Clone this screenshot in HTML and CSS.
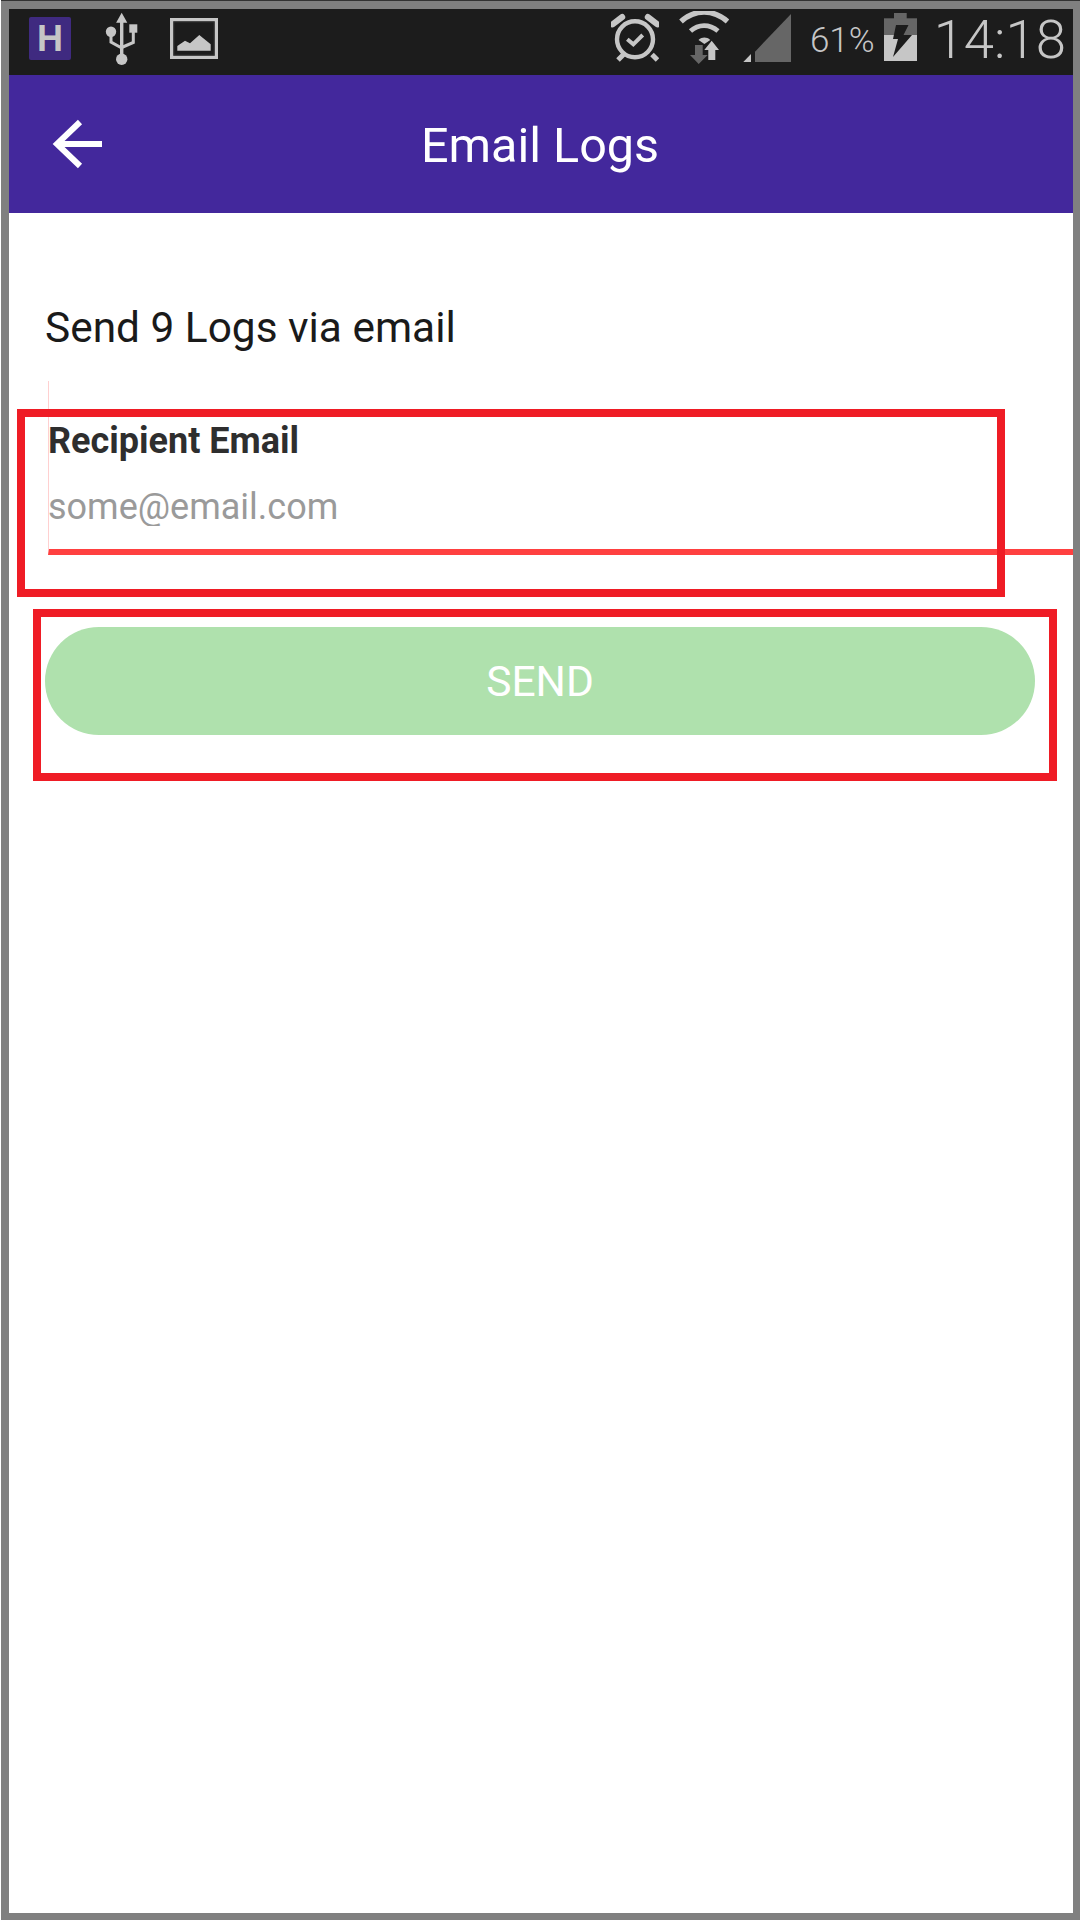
FILE: index.html
```html
<!DOCTYPE html>
<html lang="en">
<head>
    <meta charset="UTF-8">
    <meta name="viewport" content="width=device-width, initial-scale=1.0">
    <title>Email Logs</title>
    <link rel="stylesheet" href="styles.css">
</head>
<body>
    <div id="frame">
        <div id="status-bar">
            <div class="status-left">
                <div class="app-badge">H</div>
                <svg class="usb-icon" width="35" height="54" viewBox="103 12 35 54">
                    <path d="M121.7 12.7l5.6 10h-3.9v32h-3.4v-32h-3.9z" fill="#c6c6c6"/>
                    <circle cx="121.7" cy="59.3" r="5.7" fill="#c6c6c6"/>
                    <circle cx="111" cy="31.7" r="5.2" fill="#c6c6c6"/>
                    <rect x="129.3" y="24.3" width="8" height="8.4" fill="#c6c6c6"/>
                    <path d="M111 34v8l10.7 6M133.3 32v10.5l-11.6 5" fill="none" stroke="#c6c6c6" stroke-width="3"/>
                </svg>
                <svg class="picture-icon" width="48" height="41" viewBox="170 18 48 41">
                    <rect x="171.7" y="19.7" width="44.6" height="37.6" fill="none" stroke="#c6c6c6" stroke-width="3.4"/>
                    <rect x="173.8" y="21.8" width="40.4" height="33.4" fill="none" stroke="#3a3a3a" stroke-width="1"/>
                    <path d="M177.3 50.7v-4.7l7.7-5.3 5 2.6 9.3-8.3 11.4 9.3v6.4z" fill="#c6c6c6"/>
                </svg>
            </div>
            <div class="status-right">
                <svg class="alarm-icon" width="48" height="50" viewBox="611 13 48 50">
                    <circle cx="635" cy="39.3" r="18" fill="none" stroke="#c6c6c6" stroke-width="4.4"/>
                    <path d="M612.6 24.4l9.6-7.4M657.4 24.4l-9.6-7.4" fill="none" stroke="#c6c6c6" stroke-width="6" stroke-linecap="round"/>
                    <path d="M618 60l5.5-5.5M652 54.5l5.5 5.5" fill="none" stroke="#c6c6c6" stroke-width="5"/>
                    <path d="M627.3 39.3l6 5 9.4-9.3" fill="none" stroke="#c6c6c6" stroke-width="4"/>
                </svg>
                <svg class="wifi-icon" width="50" height="54" viewBox="679 11 50 54">
                    <path d="M681 21.5c14-12.5 32-12.5 46.500 0" fill="none" stroke="#c6c6c6" stroke-width="5.400"/>
                    <path d="M690.500 31c8-7.200 19-7.200 27.500 0" fill="none" stroke="#c6c6c6" stroke-width="4.800"/>
                    <path d="M698.500 40c3.800-3.200 8-3.200 11.800 0l-5.900 4z" fill="#c6c6c6"/>
                    <path d="M695 45h7.700v10h5l-9 9-8.700-9h5z" fill="#666"/>
                    <path d="M711.700 40.700l7.300 9.300h-3.700v10h-7v-10h-4z" fill="#c6c6c6"/>
                </svg>
                <svg class="signal-icon" width="48" height="48" viewBox="743 14 48 48">
                    <path d="M743.300 62l7.700-8v8z" fill="#c6c6c6"/>
                    <path d="M755 62v-10.300l36-37.700v48z" fill="#666"/>
                </svg>
                <span class="battery-text">61%</span>
                <svg class="battery-icon" width="33" height="48" viewBox="884 13 33 48">
                    <rect x="894" y="13" width="12.700" height="6" fill="#666"/>
                    <rect x="884" y="18.300" width="33" height="17" fill="#666"/>
                    <rect x="884" y="35" width="33" height="26" fill="#c6c6c6"/>
                    <path d="M896 25h12.500l-5 10h8.500l-19 22 5-18h-5z" fill="#1c1c1c"/>
                </svg>
                <span class="clock">14:18</span>
            </div>
        </div>

        <div id="app-bar">
            <svg class="back-icon" width="60" height="50" viewBox="50 119 60 50">
                <path d="M102 144H57M80 122l-23 22 23 22" fill="none" stroke="#fff" stroke-width="6"/>
            </svg>
            <h1>Email Logs</h1>
            <div class="app-bar-spacer"></div>
        </div>

        <div id="content">
            <p class="intro">Send 9 Logs via email</p>
            <div class="field">
                <label for="recipient">Recipient Email</label>
                <input id="recipient" type="email" placeholder="some@email.com">
            </div>
            <button class="send-btn">SEND</button>
        </div>

        <!-- annotation boxes drawn over the screenshot -->
        <div class="mark mark-field"></div>
        <div class="mark mark-send"></div>
    </div>
</body>
</html>
```

FILE: styles.css
```css
* {
    margin: 0;
    padding: 0;
    box-sizing: border-box;
}

html, body {
    height: 100%;
    background-color: #fff;
    font-family: Roboto, 'Liberation Sans', sans-serif;
    overflow: hidden;
}

#frame {
    position: relative;
    height: 1919px;
    width: 1079px;
    margin-left: 1px;
    border: solid #808080;
    border-width: 8px 7px 7px 8px;
    box-shadow: 0 -1px 0 0 #333;
    margin-top: 1px;
    display: flex;
    flex-direction: column;
    background-color: #fff;
}

/* Status bar */
#status-bar {
    height: 66px;
    background-color: #1c1c1c;
    display: flex;
    justify-content: space-between;
    align-items: flex-start;
    padding: 0 7px 0 20px;
    color: #c6c6c6;
}

.status-left, .status-right {
    display: flex;
    align-items: flex-start;
}

.status-left {
    gap: 32px;
}

.app-badge {
    width: 42px;
    height: 43px;
    margin-top: 8px;
    background-color: #3f2a80;
    border-radius: 2px;
    color: #c6c6c6;
    font-family: 'Liberation Sans', sans-serif;
    font-size: 36px;
    font-weight: 700;
    line-height: 43px;
    text-align: center;
}

.usb-icon {
    margin-top: 3px;
}

.picture-icon {
    margin-top: 9px;
}

.alarm-icon {
    margin-top: 4px;
}

.wifi-icon {
    margin-top: 2px;
    margin-left: 20px;
}

.signal-icon {
    margin-top: 5px;
    margin-left: 14px;
}

.battery-text {
    margin-left: 19px;
    font-size: 35px;
    font-weight: 300;
    line-height: 64px;
}

.battery-icon {
    margin-top: 4px;
    margin-left: 9px;
}

.clock {
    margin-left: 17px;
    font-size: 54.500px;
    font-weight: 300;
    line-height: 60px;
}

/* App bar */
#app-bar {
    height: 138px;
    background-color: #43289c;
    display: flex;
    align-items: center;
}

.back-icon {
    margin-left: 41px;
    margin-top: -1px;
}

#app-bar h1 {
    flex: 1;
    margin-top: 2px;
    color: #fff;
    font-size: 48.500px;
    font-weight: 400;
    text-align: center;
}

.app-bar-spacer {
    width: 103px;
}

/* Form */
#content {
    flex: 1;
    display: flex;
    flex-direction: column;
    align-items: flex-start;
}

.intro {
    margin: 92px 0 0 36px;
    color: #1a1a1a;
    font-size: 42.400px;
    line-height: 46px;
}

.field {
    align-self: stretch;
    height: 174px;
    margin: 30px 0 0 39px;
    padding-top: 41px;
    border-left: 1px solid #ffd0d0;
    border-bottom: 6px solid #ff4040;
}

.field label {
    display: block;
    margin-left: -1px;
    color: #2e2e2e;
    font-size: 36px;
    font-weight: 700;
    line-height: 38px;
}

.field input {
    display: block;
    width: 100%;
    margin: 28px 0 0 -1px;
    border: none;
    outline: none;
    background: none;
    font-family: inherit;
    font-size: 36px;
    line-height: 38px;
}

.field input::placeholder {
    color: #9a9a9a;
    opacity: 1;
}

.send-btn {
    width: 990px;
    height: 108px;
    margin: 72px 0 0 36px;
    border: none;
    border-radius: 54px;
    background-color: #afe1ad;
    color: #fff;
    font-family: inherit;
    font-size: 42.500px;
}

/* Red annotation boxes */
.mark {
    position: absolute;
    border: 8px solid #ef1c25;
}

.mark-field {
    left: 8px;
    top: 400px;
    width: 988px;
    height: 188px;
}

.mark-send {
    left: 24px;
    top: 600px;
    width: 1024px;
    height: 172px;
}
```
